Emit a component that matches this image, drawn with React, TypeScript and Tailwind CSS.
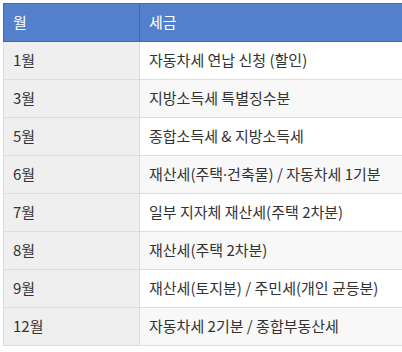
import React from "react";

const rows: [string, React.ReactNode][] = [
  ["1월", "자동차세 연납 신청 (할인)"],
  ["3월", "지방소득세 특별징수분"],
  ["5월", "종합소득세 & 지방소득세"],
  [
    "6월",
    <>
      재산세(주택<span style={{ fontFamily: '"Noto Sans", sans-serif' }}>·</span>건축물) / 자동차세 1기분
    </>,
  ],
  ["7월", "일부 지자체 재산세(주택 2차분)"],
  ["8월", "재산세(주택 2차분)"],
  ["9월", "재산세(토지분) / 주민세(개인 균등분)"],
  ["12월", "자동차세 2기분 / 종합부동산세"],
];

export default function App() {
  return (
    <div
      className="w-[402px] h-[352px] bg-white overflow-hidden pt-[3px] pl-[3px]"
      style={{ fontFamily: '"Noto Sans CJK KR", "Noto Sans", sans-serif' }}
    >
      <table className="w-[420px] border-collapse text-[15px] text-[#333]">
        <thead>
          <tr className="h-[38px] bg-[#5380cc] text-white">
            <th className="w-[136px] border border-[#3f69b5] text-left font-normal pl-[9px]">월</th>
            <th className="border border-[#3f69b5] text-left font-normal pl-[9px]">세금</th>
          </tr>
        </thead>
        <tbody>
          {rows.map(([m, t], i) => (
            <tr key={m} className="h-[38px]">
              <td className="border border-[#dddddd] bg-[#efefef] pl-[9px]">{m}</td>
              <td className={"border border-[#dddddd] pl-[9px] " + (i % 2 === 1 ? "bg-[#f8f8f8]" : "bg-white")}>{t}</td>
            </tr>
          ))}
        </tbody>
      </table>
    </div>
  );
}
